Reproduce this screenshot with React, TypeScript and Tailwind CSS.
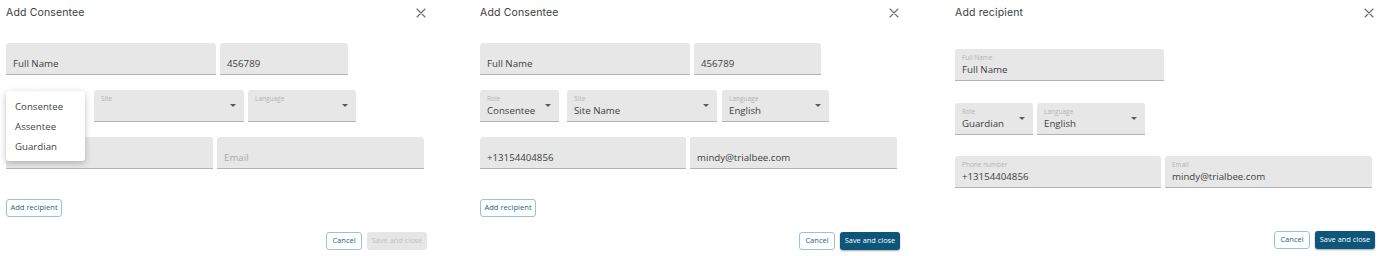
import React from 'react';

type FieldProps = {
  className: string;
  label?: string;
  value?: string;
  placeholder?: string;
  select?: boolean;
};

// Filled text field / select, material style
const Field: React.FC<FieldProps> = ({ className, label, value, placeholder, select }) => (
  <div className={`flex h-[32px] shrink-0 rounded-t-[3px] border-b border-[#b3b3b3] bg-[#e7e7e7] pl-[7px] pr-[8px] ${className}`}>
    <div className="flex min-w-0 flex-1 flex-col pt-[4px]">
      <div className="h-[10px] text-[6.5px] leading-[10px] text-[#b4b4b4]">{label}</div>
      <div className={`h-[13px] whitespace-nowrap pt-[1px] text-[9.7px] leading-[12px] ${value ? 'text-[#3f3f3f]' : 'text-[#a9a9a9]'}`}>
        {value || placeholder}
      </div>
    </div>
    {select && (
      <div className="flex items-center pb-[1px]">
        <div className="h-0 w-0 border-x-[3px] border-t-[3px] border-x-transparent border-t-[#5a5a5a]" />
      </div>
    )}
  </div>
);

const CloseIcon = () => (
  <svg width="10" height="10" viewBox="0 0 10 10" className="text-[#6b6b6b]">
    <path d="M1 1L9 9M9 1L1 9" stroke="currentColor" strokeWidth="1.1" strokeLinecap="round" />
  </svg>
);

const Header: React.FC<{ title: string }> = ({ title }) => (
  <div className="flex h-[26px] items-center justify-between pr-[1px]">
    <span className="font-['Inter',sans-serif] text-[10.5px] tracking-[0.15px] text-[#3d3d3d]">{title}</span>
    <CloseIcon />
  </div>
);

const Actions: React.FC<{ disabled?: boolean }> = ({ disabled }) => (
  <div className="flex justify-end gap-[5px]">
    <button className="flex h-[18px] w-[36px] items-center justify-center rounded-[3px] border border-[#9cc2d3] bg-white text-[7.5px] text-[#1e5f7e]">
      Cancel
    </button>
    {disabled ? (
      <button className="flex h-[18px] w-[60px] items-center justify-center rounded-[3px] bg-[#e6e6e6] text-[7.4px] text-[#c2c2c2]">
        Save and close
      </button>
    ) : (
      <button className="flex h-[18px] w-[60px] items-center justify-center rounded-[3px] bg-[#0d5679] text-[7.4px] text-white shadow-[0_1px_2px_rgba(0,0,0,0.35)]">
        Save and close
      </button>
    )}
  </div>
);

const AddRecipient = () => (
  <button className="flex h-[18px] w-[56px] items-center justify-center rounded-[3px] border border-[#9cc2d3] bg-white text-[7.6px] text-[#1e5f7e]">
    Add recipient
  </button>
);

const roles = ['Consentee', 'Assentee', 'Guardian'];

export default function App() {
  return (
    <div className="flex h-[256px] w-[1382px] bg-white font-['Open_Sans',sans-serif]">
      {/* Panel 1: role menu open */}
      <div className="w-[460px] shrink-0 pl-[6px]">
        <div className="flex w-[421px] flex-col">
          <Header title="Add Consentee" />
          <div className="mt-[17px] flex gap-[4px]">
            <Field className="w-[210px]" value="Full Name" />
            <Field className="w-[128px]" value="456789" />
          </div>
          <div className="mt-[15px] flex gap-[4px]">
            <div className="relative z-10 mr-[4px] h-[32px] w-[80px] shrink-0">
              <div className="absolute left-0 top-[1px] w-[79px] rounded-[3px] bg-white py-[5px] shadow-[0_2px_6px_rgba(0,0,0,0.25)]">
                {roles.map((r) => (
                  <div key={r} className="h-[20px] pl-[9px] text-[9.7px] leading-[21px] text-[#3f3f3f]">
                    {r}
                  </div>
                ))}
              </div>
            </div>
            <Field className="w-[150px]" label="Site" select />
            <Field className="w-[108px]" label="Language" select />
          </div>
          <div className="mt-[15px] flex gap-[4px]">
            <Field className="w-[207px]" />
            <Field className="w-[207px]" placeholder="Email" />
          </div>
          <div className="mt-[30px] flex">
            <AddRecipient />
          </div>
          <div className="mt-[15px]">
            <Actions disabled />
          </div>
        </div>
      </div>

      {/* Panel 2: filled consentee */}
      <div className="w-[460px] shrink-0 pl-[20px]">
        <div className="flex w-[420px] flex-col">
          <Header title="Add Consentee" />
          <div className="mt-[17px] flex gap-[4px]">
            <Field className="w-[210px]" value="Full Name" />
            <Field className="w-[127px]" value="456789" />
          </div>
          <div className="mt-[15px] flex">
            <Field className="mr-[8px] w-[79px]" label="Role" value="Consentee" select />
            <Field className="mr-[5px] w-[150px]" label="Site" value="Site Name" select />
            <Field className="w-[107px]" label="Language" value="English" select />
          </div>
          <div className="mt-[15px] flex gap-[4px]">
            <Field className="w-[206px]" value="+13154404856" />
            <Field className="w-[207px]" value="mindy@trialbee.com" />
          </div>
          <div className="mt-[30px] flex">
            <AddRecipient />
          </div>
          <div className="mt-[15px]">
            <Actions />
          </div>
        </div>
      </div>

      {/* Panel 3: add recipient */}
      <div className="flex-1 pl-[35px]">
        <div className="flex w-[420px] flex-col">
          <Header title="Add recipient" />
          <div className="mt-[23px] flex">
            <Field className="w-[209px]" label="Full Name" value="Full Name" />
          </div>
          <div className="mt-[22px] flex gap-[4px]">
            <Field className="w-[78px]" label="Role" value="Guardian" select />
            <Field className="w-[108px]" label="Language" value="English" select />
          </div>
          <div className="mt-[21px] flex gap-[4px]">
            <Field className="w-[206px]" label="Phone number" value="+13154404856" />
            <Field className="w-[207px]" label="Email" value="mindy@trialbee.com" />
          </div>
          <div className="mt-[43px]">
            <Actions />
          </div>
        </div>
      </div>
    </div>
  );
}
